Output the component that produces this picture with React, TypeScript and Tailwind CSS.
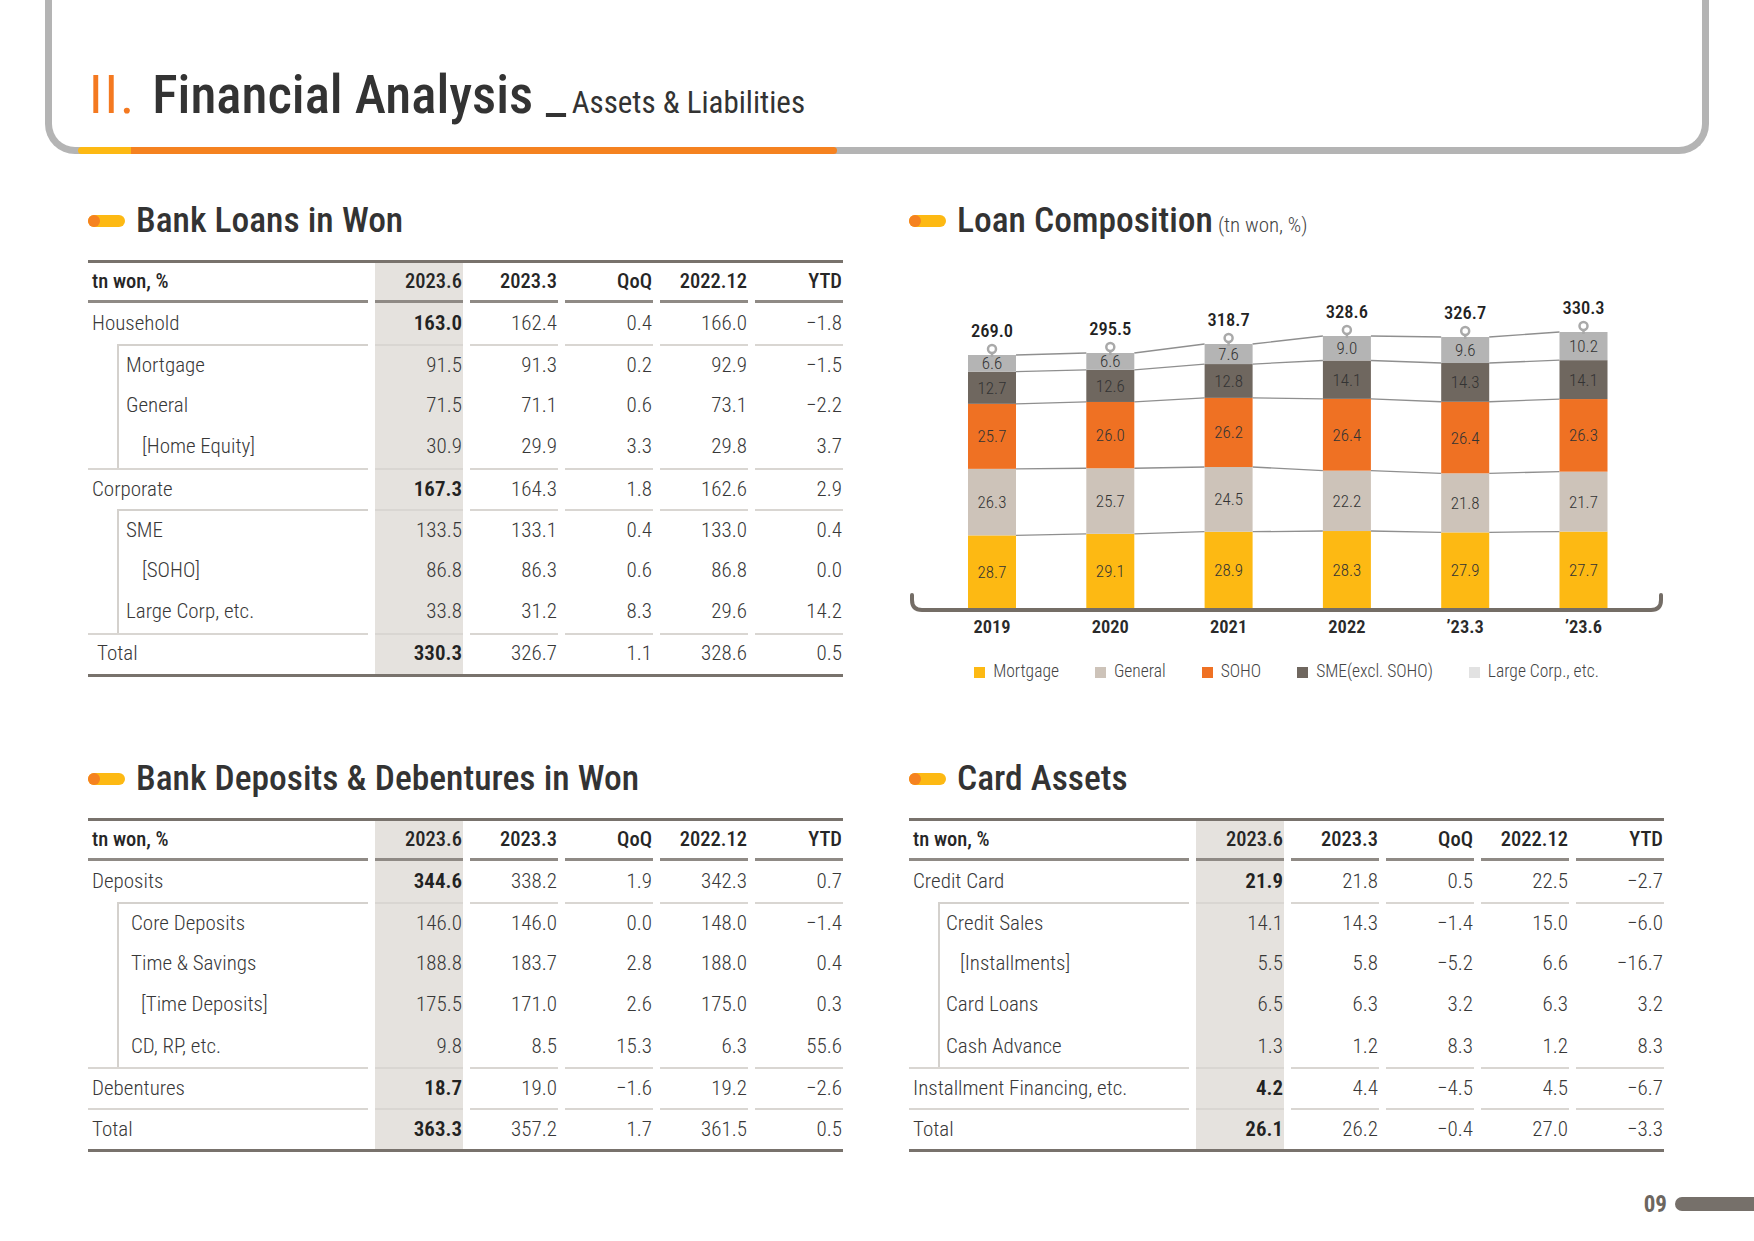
import React from "react";
import clsx from "clsx";

type Row = {
  label: string;
  level: 0 | 1 | 2;
  sep?: "full" | "indent";
  vals: string[];
  pl?: string;
};

const heads = ["2023.6", "2023.3", "QoQ", "2022.12", "YTD"];

const loans: Row[] = [
  { label: "Household", level: 0, vals: ["163.0", "162.4", "0.4", "166.0", "−1.8"] },
  { label: "Mortgage", level: 1, sep: "indent", vals: ["91.5", "91.3", "0.2", "92.9", "−1.5"] },
  { label: "General", level: 1, vals: ["71.5", "71.1", "0.6", "73.1", "−2.2"] },
  { label: "[Home Equity]", level: 2, vals: ["30.9", "29.9", "3.3", "29.8", "3.7"] },
  { label: "Corporate", level: 0, sep: "full", vals: ["167.3", "164.3", "1.8", "162.6", "2.9"] },
  { label: "SME", level: 1, sep: "indent", vals: ["133.5", "133.1", "0.4", "133.0", "0.4"] },
  { label: "[SOHO]", level: 2, vals: ["86.8", "86.3", "0.6", "86.8", "0.0"] },
  { label: "Large Corp, etc.", level: 1, vals: ["33.8", "31.2", "8.3", "29.6", "14.2"] },
  { label: "Total", level: 0, sep: "full", pl: "pl-[9px]", vals: ["330.3", "326.7", "1.1", "328.6", "0.5"] },
];

const deposits: Row[] = [
  { label: "Deposits", level: 0, vals: ["344.6", "338.2", "1.9", "342.3", "0.7"] },
  { label: "Core Deposits", level: 1, sep: "indent", vals: ["146.0", "146.0", "0.0", "148.0", "−1.4"] },
  { label: "Time & Savings", level: 1, vals: ["188.8", "183.7", "2.8", "188.0", "0.4"] },
  { label: "[Time Deposits]", level: 2, vals: ["175.5", "171.0", "2.6", "175.0", "0.3"] },
  { label: "CD, RP, etc.", level: 1, vals: ["9.8", "8.5", "15.3", "6.3", "55.6"] },
  { label: "Debentures", level: 0, sep: "full", vals: ["18.7", "19.0", "−1.6", "19.2", "−2.6"] },
  { label: "Total", level: 0, sep: "full", vals: ["363.3", "357.2", "1.7", "361.5", "0.5"] },
];

const cards: Row[] = [
  { label: "Credit Card", level: 0, vals: ["21.9", "21.8", "0.5", "22.5", "−2.7"] },
  { label: "Credit Sales", level: 1, sep: "indent", vals: ["14.1", "14.3", "−1.4", "15.0", "−6.0"] },
  { label: "[Installments]", level: 2, vals: ["5.5", "5.8", "−5.2", "6.6", "−16.7"] },
  { label: "Card Loans", level: 1, vals: ["6.5", "6.3", "3.2", "6.3", "3.2"] },
  { label: "Cash Advance", level: 1, vals: ["1.3", "1.2", "8.3", "1.2", "8.3"] },
  { label: "Installment Financing, etc.", level: 0, sep: "full", vals: ["4.2", "4.4", "−4.5", "4.5", "−6.7"] },
  { label: "Total", level: 0, sep: "full", vals: ["26.1", "26.2", "−0.4", "27.0", "−3.3"] },
];

function DataTable({ rows, l1, l2 }: { rows: Row[]; l1: string; l2: string }) {
  return (
    <div className="w-[755px] border-t-[3px] border-b-[3px] border-[#78726c]">
      <div className="grid grid-cols-[280px_repeat(5,88px)] gap-x-[7px] h-[40px] text-[20.5px] font-medium text-[#262626]">
        <div className="flex items-center pl-[4px] border-b-[3px] border-[#8f8a85]">tn won, %</div>
        {heads.map((h, i) => (
          <div
            key={h}
            className={clsx(
              "flex items-center justify-end pr-[1px] border-b-[3px] border-[#8f8a85]",
              i === 0 && "bg-[#e5e2de]"
            )}
          >
            {h}
          </div>
        ))}
      </div>
      {rows.map((r) => (
        <div
          key={r.label}
          className="grid grid-cols-[280px_repeat(5,88px)] gap-x-[7px] h-[41.2px] text-[21px] font-light text-[#383838]"
        >
          {r.level === 0 ? (
            <div
              className={clsx(
                "flex items-center",
                r.sep === "full" && "border-t-2 border-[#d9d6d2]",
                r.pl ?? "pl-[4px]"
              )}
            >
              {r.label}
            </div>
          ) : (
            <div className="pl-[29px]">
              <div
                className={clsx(
                  "h-full flex items-center border-l-2 border-[#d4d1cd]",
                  r.sep === "indent" && "border-t-2",
                  r.level === 1 ? l1 : l2
                )}
              >
                {r.label}
              </div>
            </div>
          )}
          {r.vals.map((v, i) => (
            <div
              key={i}
              className={clsx(
                "flex items-center justify-end pr-[1px]",
                r.sep && "border-t-2 border-[#d9d6d2]",
                i === 0 && "bg-[#e5e2de]",
                i === 0 && r.level === 0 && "font-semibold text-[#222]"
              )}
            >
              {v}
            </div>
          ))}
        </div>
      ))}
    </div>
  );
}

function Heading({ children, extra }: { children: React.ReactNode; extra?: string }) {
  return (
    <div className="flex items-center h-[36px]">
      <div className="relative w-[37px] h-[12px] rounded-full bg-[#fdb913]">
        <div className="absolute left-0 top-0 w-[12px] h-[12px] rounded-full bg-[#f58220]" />
      </div>
      <div className="ml-[11px] flex items-baseline">
        <span className="text-[35.5px] leading-none font-medium text-[#333]">{children}</span>
        {extra && <span className="ml-[5px] text-[21px] leading-none font-light text-[#444]">{extra}</span>}
      </div>
    </div>
  );
}

const bars = [
  { label: "2019", total: "269.0", h: 253, segs: [28.7, 26.3, 25.7, 12.7, 6.6] },
  { label: "2020", total: "295.5", h: 255, segs: [29.1, 25.7, 26.0, 12.6, 6.6] },
  { label: "2021", total: "318.7", h: 264, segs: [28.9, 24.5, 26.2, 12.8, 7.6] },
  { label: "2022", total: "328.6", h: 272, segs: [28.3, 22.2, 26.4, 14.1, 9.0] },
  { label: "’23.3", total: "326.7", h: 271, segs: [27.9, 21.8, 26.4, 14.3, 9.6] },
  { label: "’23.6", total: "330.3", h: 276, segs: [27.7, 21.7, 26.3, 14.1, 10.2] },
];
const segColors = ["#fdb913", "#cdc3b9", "#ef7123", "#6f675f", "#b4b4b4"];
const BOTTOM = 369;
const BW = 48;

function Chart() {
  const data = bars.map((b, i) => {
    const cx = 83 + i * 118.3;
    let y = BOTTOM;
    const ys = [y];
    b.segs.forEach((s) => {
      y -= (b.h * s) / 100;
      ys.push(y);
    });
    return { ...b, cx, ys };
  });
  return (
    <svg width={755} height={404} viewBox="0 0 755 404" fontFamily="'Roboto Condensed', sans-serif">
      {data.slice(0, -1).map((b, i) => {
        const n = data[i + 1];
        return [1, 2, 3, 4, 5].map((k) => (
          <line
            key={`${i}-${k}`}
            x1={b.cx + BW / 2}
            y1={b.ys[k]}
            x2={n.cx - BW / 2}
            y2={n.ys[k]}
            stroke="#8f8f8f"
            strokeWidth={1.3}
          />
        ));
      })}
      {data.map((b) => (
        <g key={b.label}>
          {b.segs.map((s, k) => (
            <g key={k}>
              <rect
                x={b.cx - BW / 2}
                y={b.ys[k + 1]}
                width={BW}
                height={b.ys[k] - b.ys[k + 1]}
                fill={segColors[k]}
              />
              <text
                x={b.cx}
                y={(b.ys[k] + b.ys[k + 1]) / 2 + 6}
                textAnchor="middle"
                fontSize={17}
                fontWeight={300}
                fill="#333"
              >
                {s.toFixed(1)}
              </text>
            </g>
          ))}
          <line x1={b.cx} y1={b.ys[5] - 2} x2={b.cx} y2={b.ys[5] + 2} stroke="#a9a9a9" strokeWidth={2.5} />
          <circle cx={b.cx} cy={b.ys[5] - 6} r={4} fill="#fff" stroke="#a9a9a9" strokeWidth={2.5} />
          <text x={b.cx} y={b.ys[5] - 18} textAnchor="middle" fontSize={18.5} fontWeight={500} fill="#222">
            {b.total}
          </text>
          <text x={b.cx} y={394} textAnchor="middle" fontSize={18.5} fontWeight={600} fill="#2a2a2a">
            {b.label}
          </text>
        </g>
      ))}
      <path
        d="M 3 356 V 361 Q 3 371 13 371 H 742 Q 752 371 752 361 V 356"
        fill="none"
        stroke="#746d66"
        strokeWidth={4}
        strokeLinecap="round"
      />
    </svg>
  );
}

const legend = [
  { c: "bg-[#fdb913]", t: "Mortgage" },
  { c: "bg-[#cdc3b9]", t: "General" },
  { c: "bg-[#ef7123]", t: "SOHO" },
  { c: "bg-[#6f675f]", t: "SME(excl. SOHO)" },
  { c: "bg-[#e2e2e2]", t: "Large Corp., etc." },
];

export default function App() {
  return (
    <div className="w-[1754px] h-[1241px] bg-white overflow-hidden font-['Roboto_Condensed',sans-serif] text-[#333]">
      {/* Header frame */}
      <div className="relative mx-[45px] h-[154px] border-x-[7px] border-b-[7px] border-[#b4b4b4] rounded-b-[30px]">
        <div className="flex items-baseline pl-[37px] pt-[68px] leading-none">
          <span className="text-[54px] font-normal tracking-[2px] text-[#f47920]">II.</span>
          <span className="ml-[16px] text-[53px] font-medium text-[#333]">Financial Analysis</span>
          <span className="ml-[12px] text-[53px] font-normal text-[#333]">_</span>
          <span className="ml-[5px] text-[31px] font-normal text-[#333]">Assets &amp; Liabilities</span>
        </div>
        <div className="absolute left-[26px] bottom-[-7px] h-[7px] w-[759px] flex">
          <div className="w-[53px] h-full rounded-l-full bg-[#fdb913]" />
          <div className="flex-1 h-full rounded-r-full bg-[#f58220]" />
        </div>
      </div>

      {/* Row 1 */}
      <div className="grid grid-cols-[755px_755px] gap-x-[66px] pl-[88px] mt-[49px]">
        <section className="h-[474px]">
          <Heading>Bank Loans in Won</Heading>
          <div className="mt-[21px]">
            <DataTable rows={loans} l1="pl-[7px]" l2="pl-[23px]" />
          </div>
        </section>
        <section className="h-[474px]">
          <Heading extra="(tn won, %)">Loan Composition</Heading>
          <Chart />
          <div className="mt-[21px] h-[16px] flex items-center justify-center gap-[36px] text-[17.5px] font-light text-[#444]">
            {legend.map((l) => (
              <div key={l.t} className="flex items-center gap-[8px]">
                <div className={clsx("w-[11px] h-[11px]", l.c)} />
                <span className="leading-none">{l.t}</span>
              </div>
            ))}
          </div>
        </section>
      </div>

      {/* Row 2 */}
      <div className="grid grid-cols-[755px_755px] gap-x-[66px] pl-[88px] mt-[84px]">
        <section>
          <Heading>Bank Deposits &amp; Debentures in Won</Heading>
          <div className="mt-[21px]">
            <DataTable rows={deposits} l1="pl-[12px]" l2="pl-[22px]" />
          </div>
        </section>
        <section>
          <Heading>Card Assets</Heading>
          <div className="mt-[21px]">
            <DataTable rows={cards} l1="pl-[6px]" l2="pl-[20px]" />
          </div>
        </section>
      </div>

      {/* Footer */}
      <div className="mt-[45px] h-[14px] flex items-center justify-end gap-[8px]">
        <span className="text-[23px] leading-none font-bold text-[#6d665f]">09</span>
        <div className="w-[79px] h-[14px] rounded-l-full bg-[#76706a]" />
      </div>
    </div>
  );
}
